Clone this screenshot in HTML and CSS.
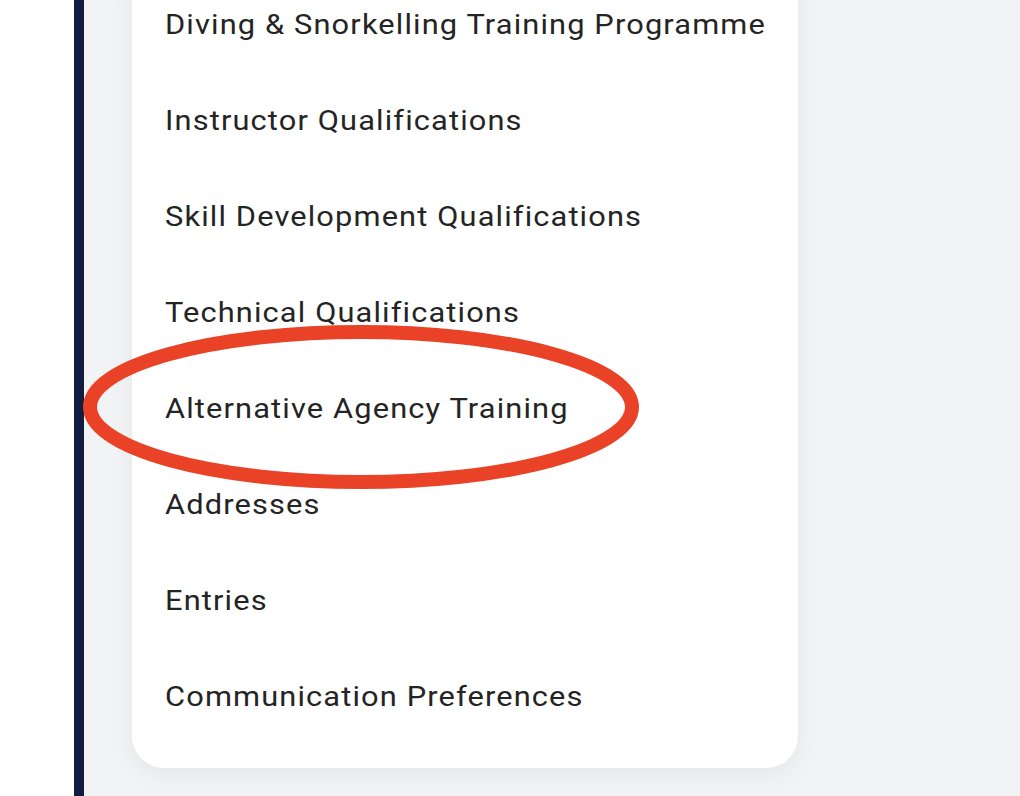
FILE: index.html
```html
<!DOCTYPE html>
<html>
<head>
<meta charset="utf-8">
<link rel="stylesheet" href="styles.css">
</head>
<body>
<div class="page">
  <div class="gutter"></div>
  <div class="rail"></div>
  <main class="main">
    <nav class="card">
      <ul class="menu">
        <li class="item"><span class="label">Diving &amp; Snorkelling Training Programme</span></li>
        <li class="item"><span class="label">Instructor Qualifications</span></li>
        <li class="item"><span class="label">Skill Development Qualifications</span></li>
        <li class="item"><span class="label">Technical Qualifications</span></li>
        <li class="item"><span class="label">Alternative Agency Training</span></li>
        <li class="item"><span class="label">Addresses</span></li>
        <li class="item"><span class="label">Entries</span></li>
        <li class="item"><span class="label">Communication Preferences</span></li>
      </ul>
    </nav>
  </main>
  <svg class="mark" width="1020" height="796" viewBox="0 0 1020 796">
    <ellipse cx="361" cy="407" rx="271" ry="75" fill="none" stroke="#ea4227" stroke-width="14"/>
  </svg>
</div>
</body>
</html>
```
FILE: styles.css
```css
html, body {
  margin: 0;
  padding: 0;
  width: 1020px;
  height: 796px;
  overflow: hidden;
  background: #ffffff;
}
.page {
  position: relative;
  display: flex;
  width: 1020px;
  height: 796px;
  font-family: Roboto, "Liberation Sans", sans-serif;
}
.gutter {
  width: 74px;
  background: #ffffff;
  flex: none;
}
.rail {
  width: 10px;
  background: #111c3e;
  flex: none;
}
.main {
  flex: 1;
  background: #f2f3f5;
  padding-left: 48px;
}
.card {
  width: 666px;
  margin-top: -23px;
  background: #ffffff;
  border-radius: 0 0 32px 32px;
  box-shadow: 0 6px 24px rgba(0, 0, 0, 0.06);
  padding: 0 0 23px 33px;
  box-sizing: border-box;
}
.menu {
  list-style: none;
  margin: 0;
  padding: 0;
}
.item {
  height: 96px;
  line-height: 96px;
  font-size: 28px;
  color: #242424;
  white-space: nowrap;
}
.label {
  display: inline-block;
  letter-spacing: 1.03px;
  transform: scaleX(1.1);
  transform-origin: left center;
}
.mark {
  position: absolute;
  left: 0;
  top: 0;
  pointer-events: none;
}
```
